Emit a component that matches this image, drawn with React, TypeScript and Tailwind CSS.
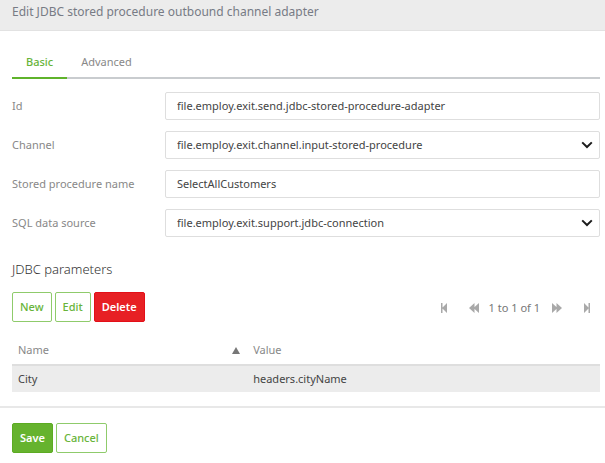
import { useState } from 'react'
import type { ReactNode } from 'react'
import clsx from 'clsx'

interface Field {
  id: string
  label: string
  value: string
  type: 'text' | 'select'
}

const FIELDS: Field[] = [
  { id: 'adapter-id', label: 'Id', value: 'file.employ.exit.send.jdbc-stored-procedure-adapter', type: 'text' },
  { id: 'channel', label: 'Channel', value: 'file.employ.exit.channel.input-stored-procedure', type: 'select' },
  { id: 'procedure', label: 'Stored procedure name', value: 'SelectAllCustomers', type: 'text' },
  { id: 'data-source', label: 'SQL data source', value: 'file.employ.exit.support.jdbc-connection', type: 'select' },
]

const PARAMETERS = [{ name: 'City', value: 'headers.cityName' }]

const TABS = ['Basic', 'Advanced']

const fieldClass =
  'h-7 w-full appearance-none rounded-xs border border-[#dedede] bg-white px-[11px] text-[11px] text-[#444] outline-none'

function FormRow({ field }: { field: Field }) {
  return (
    <div className="flex items-center">
      <label htmlFor={field.id} className="w-[153px] shrink-0 text-[11px] text-[#888]">
        {field.label}
      </label>
      <div className="relative flex-1">
        {field.type === 'text' ? (
          <input id={field.id} type="text" defaultValue={field.value} className={clsx(fieldClass, 'pb-0.5')} />
        ) : (
          <>
            <select id={field.id} className={fieldClass}>
              <option>{field.value}</option>
            </select>
            <svg
              viewBox="0 0 12 8"
              className="pointer-events-none absolute top-2.5 right-[7px] h-2 w-3"
              fill="none"
              stroke="#1c1c1c"
              strokeWidth="2"
            >
              <path d="M1.2 1.4 6 6l4.800-4.600" />
            </svg>
          </>
        )}
      </div>
    </div>
  )
}

interface ButtonProps {
  variant: 'outline' | 'danger' | 'primary'
  children: ReactNode
}

function Button({ variant, children }: ButtonProps) {
  return (
    <button
      type="button"
      className={clsx(
        'h-[30px] rounded-xs border px-[7px] text-[11px]',
        variant === 'outline' && 'border-[#8fcb6b] bg-white font-medium text-[#68b43a]',
        variant === 'danger' && 'border-[#e30f18] bg-[#e72024] font-semibold text-white',
        variant === 'primary' && 'border-[#5cab22] bg-[#66b32e] font-semibold text-white',
      )}
    >
      {children}
    </button>
  )
}

function PagerButton({ label, children }: { label: string; children: ReactNode }) {
  return (
    <button type="button" aria-label={label} className="flex w-2.5 justify-center">
      <svg viewBox="0 0 10 10" className="size-2.5" fill="#a9a9a9">
        {children}
      </svg>
    </button>
  )
}

export default function App() {
  const [activeTab, setActiveTab] = useState('Basic')

  return (
    <div className="bg-white font-['Noto_Sans','Open_Sans',sans-serif] text-[11px] text-[#444]">
      <header className="h-[31px] border-b border-[#e2e2e2] bg-[#ececec] px-3">
        <h1 className="text-xs leading-6 text-[#777b85]">Edit JDBC stored procedure outbound channel adapter</h1>
      </header>

      <main className="pr-[5px] pl-3">
        <div role="tablist" className="mt-4 flex border-b-2 border-[#c9cccf]">
          {TABS.map((tab) => (
            <button
              key={tab}
              type="button"
              role="tab"
              aria-selected={tab === activeTab}
              onClick={() => setActiveTab(tab)}
              className={clsx(
                '-mb-0.5 h-8 border-b-2 px-3.5 text-[11px]',
                tab === activeTab ? 'border-[#5fb32b] font-medium text-[#68b43a]' : 'border-transparent text-[#888]',
              )}
            >
              {tab}
            </button>
          ))}
        </div>

        <form className="mt-[13px] flex flex-col gap-[11px]">
          {FIELDS.map((field) => (
            <FormRow key={field.id} field={field} />
          ))}
        </form>

        <section>
          <h2 className="mt-[22px] text-[13px] leading-5 font-light text-[#333]">JDBC parameters</h2>

          <div className="mt-[13px] flex items-center justify-between">
            <div className="flex gap-[3px]">
              <Button variant="outline">New</Button>
              <Button variant="outline">Edit</Button>
              <Button variant="danger">Delete</Button>
            </div>
            <div className="flex items-center pt-0.5 pr-2 text-[#777]">
              <div className="flex gap-5 pr-2.5">
                <PagerButton label="First page">
                  <path d="M2 0h1.500v10H2zM8 0v10L3 5z" />
                </PagerButton>
                <PagerButton label="Previous page">
                  <path d="M5.500 0v10L0 5zM10 0v10L4.500 5z" />
                </PagerButton>
              </div>
              <span>1 to 1 of 1</span>
              <div className="flex gap-5 pl-3">
                <PagerButton label="Next page">
                  <path d="M0 0v10l5.500-5zM4.500 0v10L10 5z" />
                </PagerButton>
                <PagerButton label="Last page">
                  <path d="M6.500 0H8v10H6.500zM2 0v10l5-5z" />
                </PagerButton>
              </div>
            </div>
          </div>

          <table className="mt-3.5 w-full table-fixed text-left">
            <thead>
              <tr className="h-[29px] border-b-2 border-[#dedede] text-[#888]">
                <th className="w-2/5 px-1.5 font-normal">
                  <div className="flex items-center justify-between">
                    Name
                    <svg viewBox="0 0 8 7" className="mr-px h-[7px] w-2" fill="#777">
                      <path d="M4 0l4 7H0z" />
                    </svg>
                  </div>
                </th>
                <th className="px-1.5 font-normal">Value</th>
              </tr>
            </thead>
            <tbody>
              {PARAMETERS.map((param) => (
                <tr key={param.name} className="h-[27px] bg-[#ececec]">
                  <td className="px-1.5">{param.name}</td>
                  <td className="px-1.5">{param.value}</td>
                </tr>
              ))}
            </tbody>
          </table>
        </section>
      </main>

      <footer className="mt-3.5 flex gap-[3px] border-t-2 border-[#e8e8e8] px-3 pt-[15px] pb-2.5">
        <Button variant="primary">Save</Button>
        <Button variant="outline">Cancel</Button>
      </footer>
    </div>
  )
}
